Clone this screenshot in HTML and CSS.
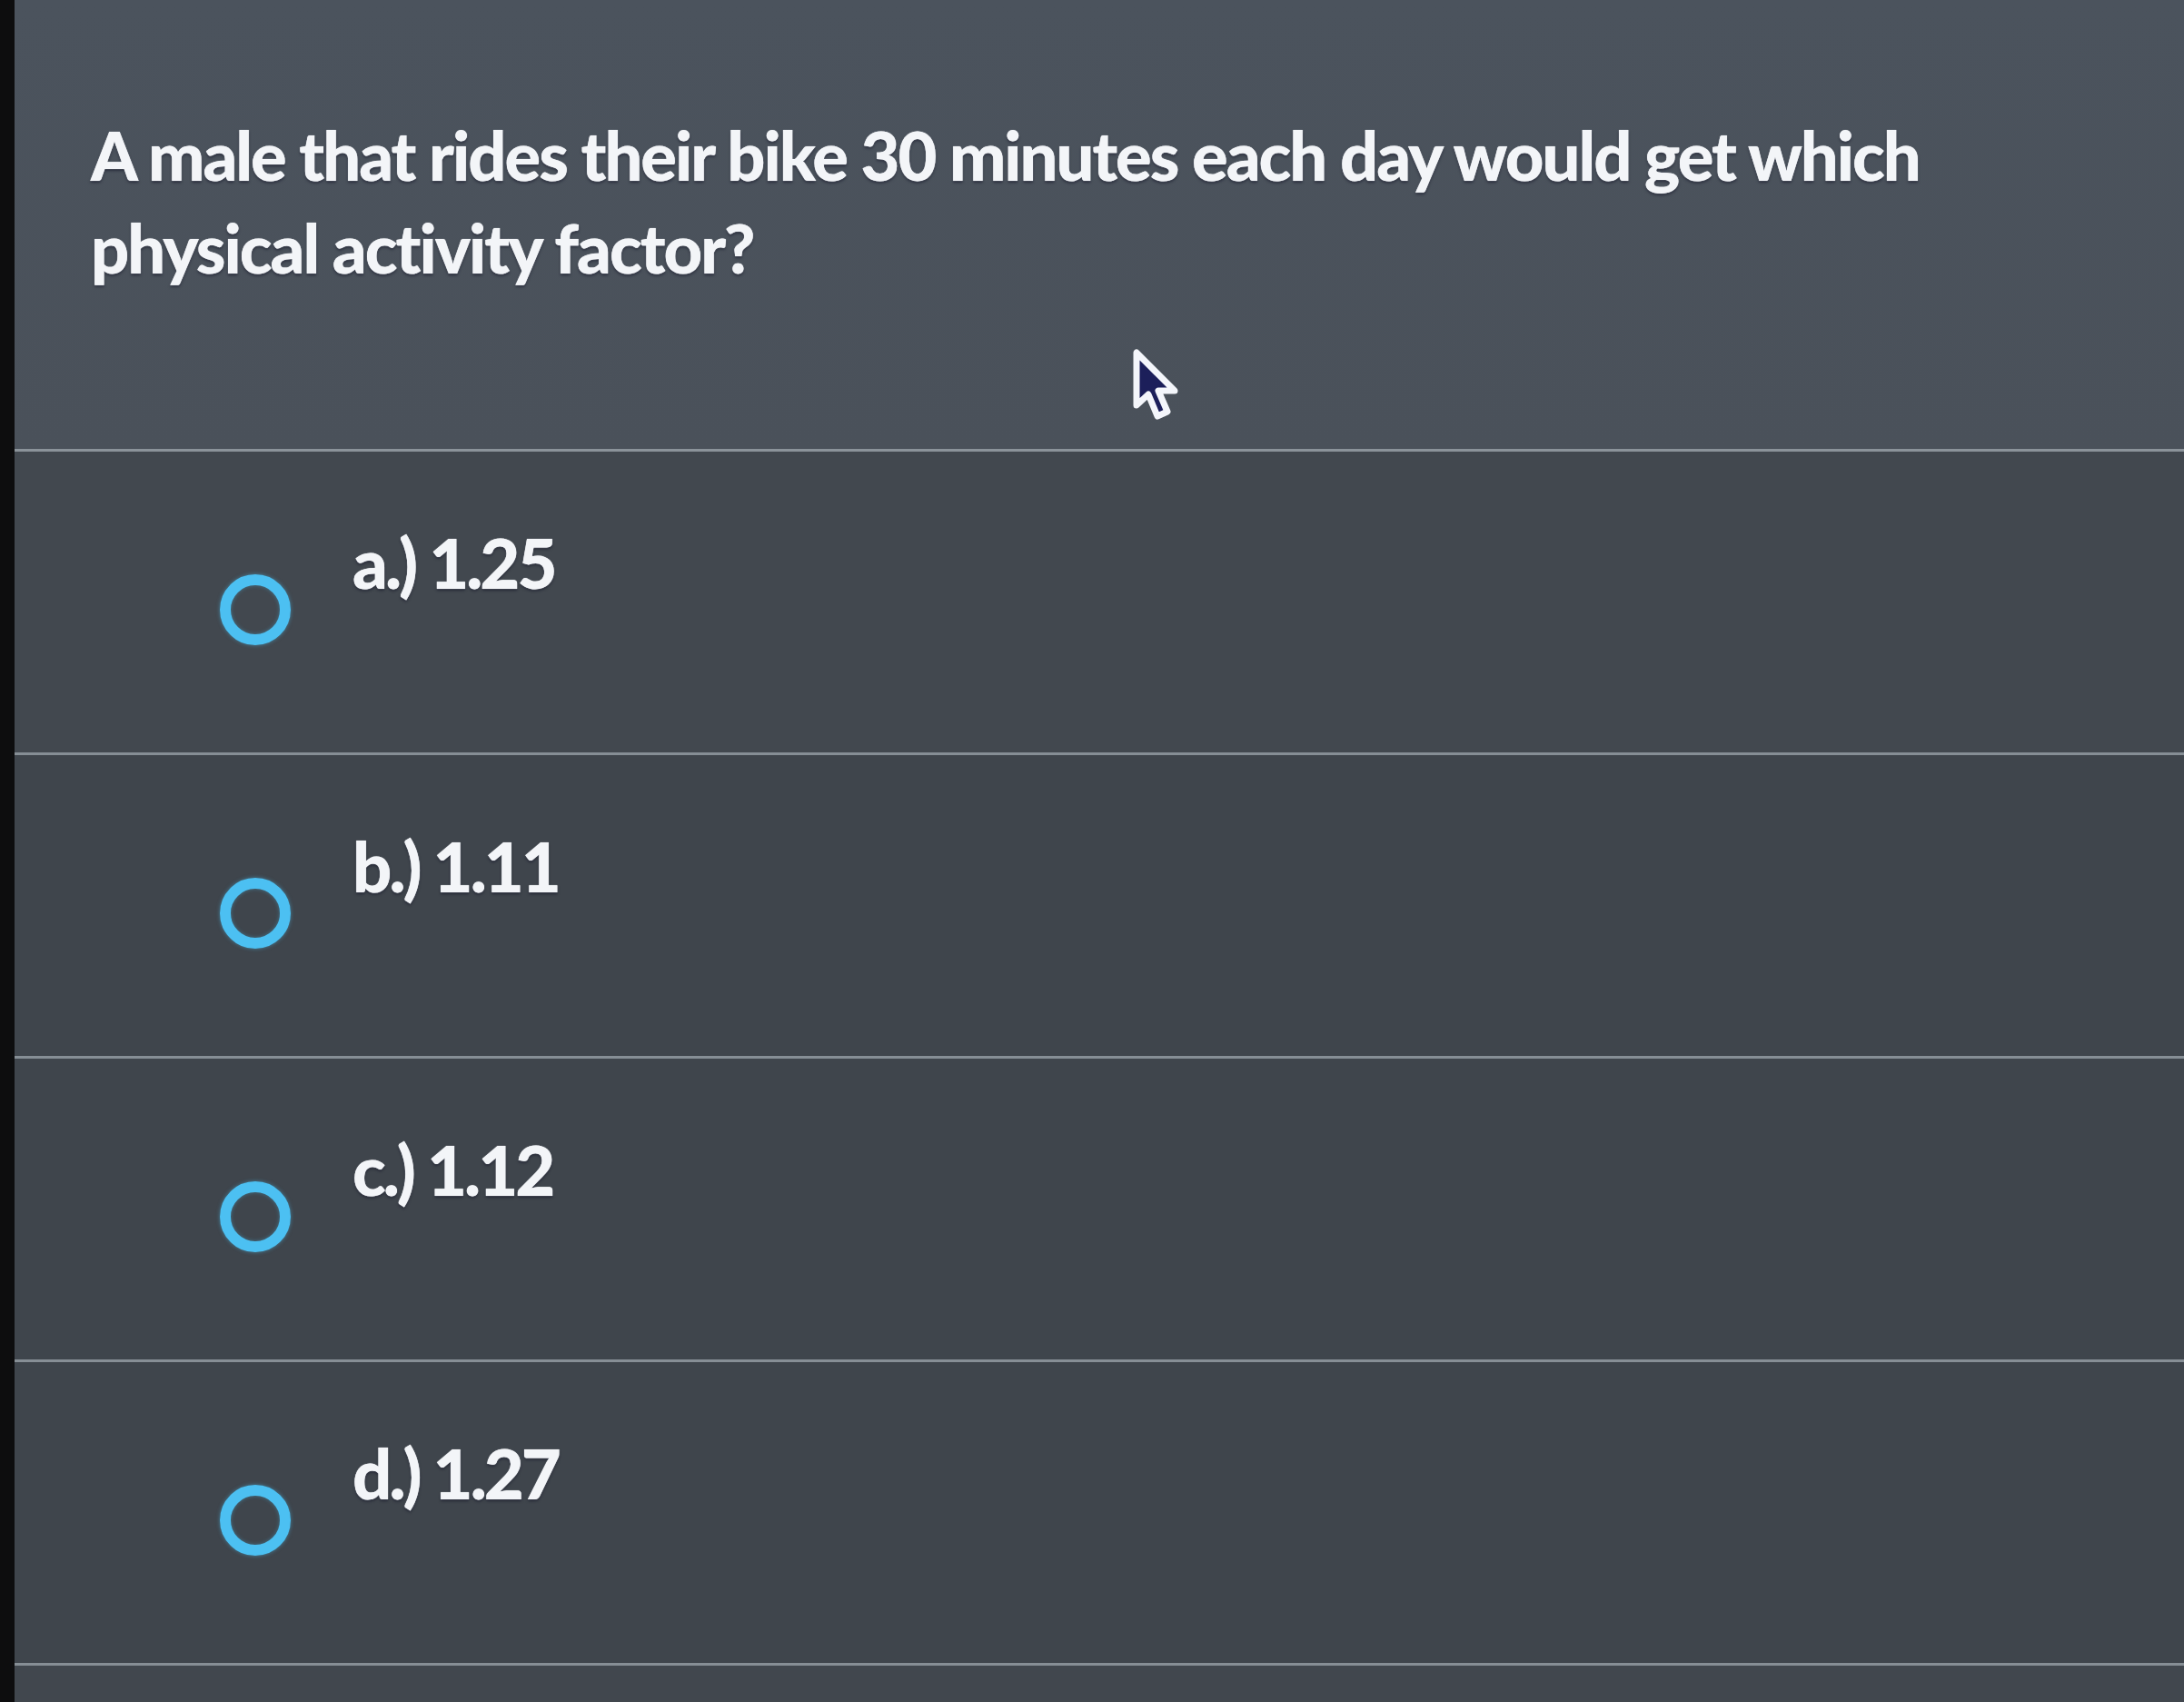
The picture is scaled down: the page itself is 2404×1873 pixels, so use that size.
FILE: index.html
```html
<!DOCTYPE html>
<html lang="en">
<head>
<meta charset="utf-8">
<title>Question</title>
<link rel="stylesheet" href="styles.css">
</head>
<body>
<div class="screen">
  <section class="question">
    <p class="question-text">A male that rides their bike 30 minutes each day would get which physical activity factor?</p>
    <svg class="cursor" width="54" height="82" viewBox="0 0 54 82" aria-hidden="true">
      <path d="M5 4 L5 62 L18 50 L28 74 L39 69 L29 46 L47 46 Z" fill="#1c1f5a" stroke="#f4f6fb" stroke-width="7" stroke-linejoin="round"/>
    </svg>
  </section>
  <ul class="options">
    <li class="option"><span class="radio"></span><span class="label">a.) 1.25</span></li>
    <li class="option"><span class="radio"></span><span class="label">b.) 1.11</span></li>
    <li class="option"><span class="radio"></span><span class="label">c.) 1.12</span></li>
    <li class="option"><span class="radio"></span><span class="label">d.) 1.27</span></li>
  </ul>
</div>
</body>
</html>
```
FILE: styles.css
```css
html, body {
  margin: 0;
  padding: 0;
  background: #42484f;
}

.screen {
  border-left: 16px solid #0d0d0e;
  min-height: 1873px;
  background: #41474e;
  font-family: Lato, "Open Sans", sans-serif;
  color: #f3f5f8;
}

.question {
  position: relative;
  background: linear-gradient(180deg, #4b535d 0%, #4a515a 100%);
  padding: 120px 120px 170px 84px;
  border-bottom: 3px solid #8b939a;
}

.question-text {
  margin: 0;
  max-width: 2120px;
  font-size: 74px;
  font-weight: 900;
  line-height: 102px;
  letter-spacing: -2px;
  text-shadow: 0 0 1px #f3f5f8, 0 2px 3px rgba(20, 22, 40, 0.6);
}

.cursor {
  position: absolute;
  left: 1230px;
  top: 384px;
}

.options {
  list-style: none;
  margin: 0;
  padding: 0;
}

.option {
  display: flex;
  align-items: flex-start;
  height: 334px;
  box-sizing: border-box;
  padding: 84px 0 0 226px;
  border-bottom: 3px solid #868e95;
  background: #3f454c;
}

.option:first-child {
  background: #42484f;
}

.radio {
  flex: none;
  width: 54px;
  height: 54px;
  margin-top: 51px;
  border: 12px solid #4cc0f2;
  border-radius: 50%;
  box-shadow: 0 0 4px rgba(76, 192, 242, 0.5), inset 0 0 4px rgba(76, 192, 242, 0.4);
}

.label {
  margin-left: 68px;
  font-size: 76px;
  font-weight: 900;
  line-height: 76px;
  letter-spacing: -3px;
  text-shadow: 0 0 1px #f3f5f8, 0 2px 3px rgba(20, 22, 40, 0.6);
}
```
